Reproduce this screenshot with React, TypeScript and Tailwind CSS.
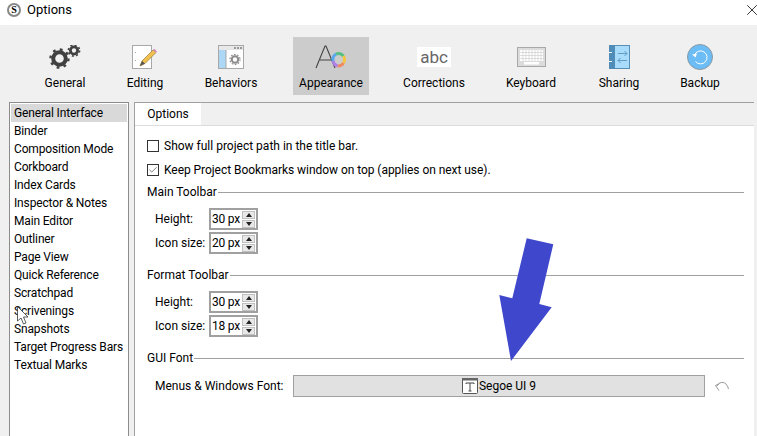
import { Check, X } from "lucide-react";

const font = "font-['Roboto','Open_Sans',sans-serif]";

const sections = [
  "General Interface",
  "Binder",
  "Composition Mode",
  "Corkboard",
  "Index Cards",
  "Inspector & Notes",
  "Main Editor",
  "Outliner",
  "Page View",
  "Quick Reference",
  "Scratchpad",
  "Scrivenings",
  "Snapshots",
  "Target Progress Bars",
  "Textual Marks",
];

function GearsIcon() {
  return (
    <svg width="32" height="24" viewBox="0 0 32 24">
      <circle cx="10.5" cy="13.5" r="6.3" fill="none" stroke="#404040" strokeWidth="4" />
      <circle cx="10.5" cy="13.5" r="9" fill="none" stroke="#404040" strokeWidth="2.4" strokeDasharray="2.8 4.27" />
      <circle cx="25" cy="5.5" r="3.6" fill="none" stroke="#404040" strokeWidth="2.8" />
      <circle cx="25" cy="5.5" r="5.6" fill="none" stroke="#404040" strokeWidth="1.6" strokeDasharray="2 2.4" />
    </svg>
  );
}

function EditingIcon() {
  return (
    <svg width="26" height="24" viewBox="0 0 26 24">
      <rect x="0.5" y="0.5" width="19" height="23" fill="#fff" stroke="#a8a8a8" />
      <path d="M3 7.5h.8M3 15.5h.8" stroke="#999" />
      <path d="M8 21l2-5L21 5l3 2.5L13 18.5z" fill="#f0c050" stroke="#9a7a30" strokeWidth="0.7" />
      <path d="M21 5l1.2-1.2 2.8 2.4L24 7.5z" fill="#d88ac0" />
      <path d="M8 21l2-5 3 2.5z" fill="#555" />
    </svg>
  );
}

function BehaviorsIcon() {
  return (
    <svg width="26" height="24" viewBox="0 0 26 24">
      <rect x="0.5" y="0.5" width="25" height="23" fill="#fff" stroke="#a8a8a8" />
      <rect x="1" y="1" width="24" height="4" fill="#e8e8e8" />
      <rect x="16" y="2" width="2" height="2" fill="#999" />
      <rect x="19" y="2" width="2" height="2" fill="#999" />
      <rect x="22" y="2" width="2" height="2" fill="#999" />
      <rect x="1" y="5" width="7" height="18" fill="#acd8f6" />
      <path d="M8 5v18" stroke="#a8a8a8" />
      <circle cx="17" cy="14.5" r="3.2" fill="none" stroke="#8a8a8a" strokeWidth="2" />
      <circle cx="17" cy="14.5" r="5" fill="none" stroke="#8a8a8a" strokeWidth="1.2" strokeDasharray="1.6 1.54" />
    </svg>
  );
}

function AppearanceIcon() {
  return (
    <svg width="32" height="24" viewBox="0 0 32 24">
      <path d="M1 23L10 1h1l9 22M5 15h12" fill="none" stroke="#444" strokeWidth="1.1" />
      <g fill="none" strokeWidth="3">
        <path d="M21 9a6.5 6.5 0 0 1 7.5 2" stroke="#55c080" />
        <path d="M28.5 11a6.5 6.5 0 0 1 0 7" stroke="#f5c542" />
        <path d="M28.5 18a6.5 6.5 0 0 1-6 3" stroke="#f08a60" />
        <path d="M22.5 21a6.5 6.5 0 0 1-4.4-5" stroke="#b080e8" />
        <path d="M18.1 16a6.5 6.5 0 0 1 2.9-7" stroke="#5aa8f0" />
      </g>
    </svg>
  );
}

function KeyboardIcon() {
  return (
    <svg width="29" height="20" viewBox="0 0 29 20">
      <rect x="0.5" y="0.5" width="28" height="19" fill="#dcdcdc" stroke="#a8a8a8" />
      <rect x="3" y="3" width="23" height="11" fill="#fff" />
      <path d="M3 5.5h23M3 8.5h23M3 11.5h23M6 3v11M9 3v11M12 3v11M15 3v11M18 3v11M21 3v11M24 3v11" stroke="#d0d0d0" strokeWidth="0.7" />
      <rect x="7" y="15" width="15" height="2.5" fill="#fff" />
    </svg>
  );
}

function SharingIcon() {
  return (
    <svg width="21" height="24" viewBox="0 0 21 24">
      <rect x="0.5" y="0.5" width="20" height="23" fill="#a8dcfa" stroke="#5a8fb5" />
      <rect x="0" y="0" width="6" height="24" fill="#4f8db8" />
      <path d="M0 7.5h3M0 16.5h3" stroke="#fff" />
      <path d="M9 8.5h9M15.5 6l2.5 2.5-2.5 2.5M18 15.5H9M11.5 13L9 15.5l2.5 2.5" fill="none" stroke="#4f8db8" strokeWidth="0.8" />
    </svg>
  );
}

function BackupIcon() {
  return (
    <svg width="26" height="26" viewBox="0 0 26 26">
      <circle cx="13" cy="13" r="12.5" fill="#6cbcf5" stroke="#8a9aa5" />
      <path d="M7.5 11A6.5 6.5 0 1 1 8.5 17.5" fill="none" stroke="#fff" strokeWidth="1" />
      <path d="M5 10.5l3.5 3 1.5-4z" fill="#fff" />
    </svg>
  );
}

function Spin({ value }: { value: string }) {
  return (
    <div className="flex h-[22px] w-[49px] items-center justify-between border-2 border-[#a0a0a0] bg-white pl-[1px] pr-[1px]">
      <span className="whitespace-nowrap tracking-[-0.2px]">{value}</span>
      <div className="flex flex-col gap-px">
        <div className="flex h-[8px] w-[13px] items-center justify-center border border-[#c0c0c0] bg-[#e8e8e8]">
          <div className="h-0 w-0 border-x-[3px] border-b-[4px] border-x-transparent border-b-[#222]" />
        </div>
        <div className="flex h-[8px] w-[13px] items-center justify-center border border-[#c0c0c0] bg-[#e8e8e8]">
          <div className="h-0 w-0 border-x-[3px] border-t-[4px] border-x-transparent border-t-[#222]" />
        </div>
      </div>
    </div>
  );
}

function GroupTitle({ title, className }: { title: string; className: string }) {
  return (
    <div className={`flex h-[16px] items-center gap-px ${className}`}>
      <span className="whitespace-nowrap">{title}</span>
      <div className="h-px flex-1 bg-[#a0a0a0]" />
    </div>
  );
}

function SpinRows({ second }: { second: string }) {
  return (
    <div className="mt-[8px] flex flex-col gap-[2px] pl-[8px]">
      <div className="flex items-center">
        <span className="w-[54px]">Height:</span>
        <Spin value="30 px" />
      </div>
      <div className="flex items-center">
        <span className="w-[54px]">Icon size:</span>
        <Spin value={second} />
      </div>
    </div>
  );
}

function ToolItem({
  label,
  icon,
  className,
  active,
}: {
  label: string;
  icon: React.ReactNode;
  className: string;
  active?: boolean;
}) {
  return (
    <div
      className={`flex h-[58px] w-[76px] flex-col items-center ${active ? "bg-[#cccccc]" : ""} ${className}`}
    >
      <div className="mt-[8px] flex h-[24px] items-center justify-center">{icon}</div>
      <span className="mt-[6px] whitespace-nowrap text-[12px] leading-[16px]">{label}</span>
    </div>
  );
}

export default function App() {
  return (
    <div className={`relative flex h-[436px] w-[757px] flex-col overflow-hidden bg-[#f0f0f0] text-[12px] leading-[16px] text-black ${font}`}>
      {/* Title bar */}
      <div className="flex h-[25px] items-center justify-between bg-white pb-[5px] pl-[7px]">
        <div className="flex items-center gap-[6px]">
          <div className="flex h-[14px] w-[14px] items-center justify-center rounded-full border-2 border-[#888] font-['Liberation_Serif',serif] text-[10px] font-bold leading-none">
            S
          </div>
          <span className="text-[13px]">Options</span>
        </div>
        <X className="-mr-[4px] h-[18px] w-[18px] text-[#222]" strokeWidth={1.2} />
      </div>

      {/* Toolbar */}
      <div className="flex h-[77px] items-start pl-[27px] pt-[12px]">
        <ToolItem label="General" icon={<GearsIcon />} className="" />
        <ToolItem label="Editing" icon={<EditingIcon />} className="ml-[4px]" />
        <ToolItem label="Behaviors" icon={<BehaviorsIcon />} className="ml-[10px]" />
        <ToolItem label="Appearance" icon={<AppearanceIcon />} className="ml-[24px]" active />
        <ToolItem
          label="Corrections"
          icon={<div className="bg-white px-[3px] text-[17px] leading-[20px] text-[#666]">abc</div>}
          className="ml-[27px]"
        />
        <ToolItem label="Keyboard" icon={<KeyboardIcon />} className="ml-[21px]" />
        <ToolItem label="Sharing" icon={<SharingIcon />} className="ml-[12px]" />
        <ToolItem label="Backup" icon={<BackupIcon />} className="ml-[5px]" />
      </div>

      <div className="flex min-h-0 flex-1 pl-[9px] pr-[3px]">
        {/* Sections list */}
        <div className="w-[120px] border-x border-t border-[#8c8c8c] bg-white p-px tracking-[-0.15px]">
          {sections.map((s, i) => (
            <div
              key={s}
              className={`flex h-[18px] items-center whitespace-nowrap pl-[3px] ${i === 0 ? "bg-[#d9d9d9]" : ""}`}
            >
              {s}
            </div>
          ))}
        </div>

        {/* Settings pane */}
        <div className="ml-[5px] flex min-w-0 flex-1 flex-col border-l border-t border-[#a0a0a0]">
          <div className="flex h-[22px]">
            <div className="flex w-[66px] items-center justify-center bg-white">Options</div>
          </div>
          <div className="flex-1 border-t border-[#dcdcdc] bg-white pl-[12px] pr-[10px] pt-[14px]">
            <div className="flex h-[12px] items-center gap-[5px]">
              <div className="h-[12px] w-[12px] border border-[#333]" />
              <span>Show full project path in the title bar.</span>
            </div>
            <div className="mt-[12px] flex h-[12px] items-center gap-[5px]">
              <div className="flex h-[12px] w-[12px] items-center justify-center border border-[#333]">
                <Check className="h-[10px] w-[10px] text-[#333]" strokeWidth={1.5} />
              </div>
              <span className="tracking-[-0.05px]">Keep Project Bookmarks window on top (applies on next use).</span>
            </div>
            <GroupTitle title="Main Toolbar" className="mt-[8px]" />
            <SpinRows second="20 px" />
            <GroupTitle title="Format Toolbar" className="mt-[13px]" />
            <SpinRows second="18 px" />
            <GroupTitle title="GUI Font" className="mt-[13px]" />
            <div className="mt-[9px] flex items-center pl-[8px]">
              <span className="w-[138px] whitespace-nowrap">Menus &amp; Windows Font:</span>
              <div className="flex h-[22px] w-[412px] items-center justify-center gap-px border border-[#a0a0a0] bg-[#e1e1e1]">
                <svg width="16" height="16" viewBox="0 0 16 16">
                  <rect x="0.5" y="0.5" width="15" height="15" rx="1" fill="#fff" stroke="#555" />
                  <rect x="0" y="0" width="16" height="2.5" fill="#666" />
                  <path d="M4 6V5h8v1M8 5v8M6.5 13h3" fill="none" stroke="#444" />
                </svg>
                <span>Segoe UI 9</span>
              </div>
              <svg className="ml-[10px]" width="14" height="11" viewBox="0 0 14 11">
                <path d="M2 5C4.5 0 11.5 -0.5 13.5 8" fill="none" stroke="#999" />
                <path d="M0.5 4.5L4.5 2.5M0.5 4.5L4 9.5" fill="none" stroke="#999" />
              </svg>
            </div>
          </div>
        </div>
      </div>

      {/* Annotation arrow */}
      <svg className="pointer-events-none absolute left-0 top-0" width="757" height="436" viewBox="0 0 757 436">
        <polygon points="526.7,238.3 553.3,244.3 539.3,304 551.7,307.3 511,361 499.3,295 512.3,298.3" fill="#3f48cc" />
      </svg>

      {/* Mouse pointer */}
      <svg className="absolute left-[17px] top-[306px]" width="12" height="20" viewBox="0 0 12 20">
        <path d="M0.5 0.5V15L4 12l2.5 6 2.5-1-2.5-6H11z" fill="#fff" stroke="#333" strokeWidth="0.8" />
      </svg>
    </div>
  );
}
